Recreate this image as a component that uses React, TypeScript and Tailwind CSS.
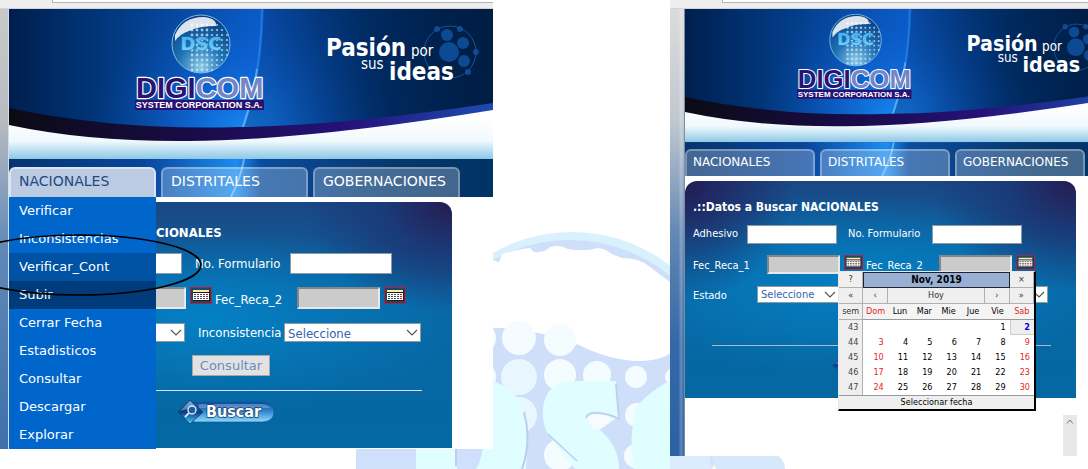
import React from "react";

const verdana = "font-['DejaVu_Sans',sans-serif]";
const tahoma = "font-['DejaVu_Sans_Condensed','DejaVu_Sans',sans-serif]";

function Watermark() {
  const dots: [number, number, number][] = [
    [480, 338, 16], [519, 338, 17], [560, 340, 16],
    [480, 377, 16], [519, 377, 18], [560, 375, 16], [597, 375, 14], [636, 377, 11], [674, 377, 9],
    [519, 415, 18], [560, 455, 16], [637, 415, 12], [636, 456, 12],
  ];
  return (
    <svg className="absolute inset-0 h-full w-full" viewBox="0 0 1088 469" preserveAspectRatio="none" aria-hidden="true">
      <circle cx="572" cy="392" r="160" fill="#d8f1fd" />
      <circle cx="570" cy="398" r="158" fill="#cfdffa" />
      <path d="M480 256 L499 262 L502 254 Q520 249 530 248 L534 252 Q545 253 550 247 Q560 244 568 249 Q584 252 598 248 Q606 249 612 254 L622 258 Q640 258 650 267 L670 282 L690 310 Q690 360 640 361 Q610 361 577 344 L574 347 Q540 326 480 328 Z" fill="#ffffff" />
      {dots.map(([x, y, r], i) => (
        <circle key={i} cx={x} cy={y} r={r} fill={i === 4 || i === 9 ? "#e8f7fd" : "#f5fcff"} />
      ))}
      <path d="M356 440 H416 V469 H356 Z" fill="#cfe0fc" />
      <path d="M416 380 H490 Q527 392 528 430 L526 469 H416 Z" fill="#e0fdff" />
      <path d="M457 440 H484 Q482 460 476 469 H457 Z" fill="#cfe0fc" />
      <path d="M524 412 Q532 440 522 469" fill="none" stroke="#bccdf0" strokeWidth="2" />
      <path d="M456 446 V466" fill="none" stroke="#bccdf0" strokeWidth="2" />
      <path d="M543 408 Q546 382 572 381 H616 Q618 396 618 417 L608 424 Q600 428 600 430 Q619 446 619 469 H575 L548 434 Q542 424 543 408 Z" fill="#e0fdff" />
      <path d="M587 417 Q600 412 611 418 Q603 433 592 428 Z" fill="#f7fdff" />
      <path d="M586 418 Q588 412 599 413 Q610 414 619 419 L616 384" fill="none" stroke="#c3cff0" strokeWidth="2" />
      <path d="M548 434 L577 461" fill="none" stroke="#bccdf0" strokeWidth="1.5" />
      <path d="M690 372 Q652 386 636 408 Q628 440 634 469 H700 Z" fill="#e0fdff" />
      <path d="M670 450 H708 L712 469 H670 Z" fill="#dcecff" />
      <path d="M708 450 H770 Q785 458 785 469 H716 Z" fill="#d6e8fc" />
    </svg>
  );
}

function BannerArt({ id, width }: { id: string; width: number }) {
  const url = (name: string) => `url(#${id}-${name})`;
  const dots: [number, number, number][] = [];
  for (let r = 0; r < 11; r++)
    for (let c = 0; c < 8; c++) {
      const x = 183 + c * 5;
      const y = 16 + r * 5;
      const d = Math.hypot(x - 192, y - 36);
      if (d < 28) dots.push([x, y, c > 3 ? 1.1 : 1.4]);
    }
  return (
    <svg className="absolute inset-0 h-full w-full" viewBox={`0 0 ${width} 188`} preserveAspectRatio="xMinYMin slice" role="img" aria-label="Digicom System Corporation S.A.">
      <defs>
        <linearGradient id={`${id}-sky`} x1="0" x2="484" y1="0" y2="0" gradientUnits="userSpaceOnUse">
          <stop offset="0" stopColor="#001e4e" />
          <stop offset="0.15" stopColor="#003272" />
          <stop offset="0.35" stopColor="#0648a0" />
          <stop offset="0.53" stopColor="#0a5ccc" />
          <stop offset="0.75" stopColor="#003a80" />
          <stop offset="1" stopColor="#00204c" />
        </linearGradient>
        <radialGradient id={`${id}-glow`} cx="235" cy="125" r="150" gradientUnits="userSpaceOnUse">
          <stop offset="0" stopColor="#1a8cf6" stopOpacity="0.9" />
          <stop offset="0.5" stopColor="#0f6adc" stopOpacity="0.5" />
          <stop offset="1" stopColor="#0a50b0" stopOpacity="0" />
        </radialGradient>
        <linearGradient id={`${id}-shade`} x1="260" x2="484" y1="80" y2="0" gradientUnits="userSpaceOnUse">
          <stop offset="0" stopColor="#001c48" stopOpacity="0.25" />
          <stop offset="1" stopColor="#001c40" stopOpacity="0.8" />
        </linearGradient>
        <linearGradient id={`${id}-band`} x1="0" x2="484" y1="0" y2="0" gradientUnits="userSpaceOnUse">
          <stop offset="0" stopColor="#0b0b14" />
          <stop offset="0.4" stopColor="#190c4a" />
          <stop offset="0.7" stopColor="#26127a" />
          <stop offset="1" stopColor="#1d4cae" />
        </linearGradient>
        <linearGradient id={`${id}-white`} x1="0" x2="0" y1="110" y2="150" gradientUnits="userSpaceOnUse">
          <stop offset="0" stopColor="#ffffff" />
          <stop offset="0.55" stopColor="#f0f9fd" />
          <stop offset="1" stopColor="#8cc8e6" />
        </linearGradient>
        <linearGradient id={`${id}-nav`} x1="0" x2="484" y1="0" y2="0" gradientUnits="userSpaceOnUse">
          <stop offset="0" stopColor="#06346e" />
          <stop offset="0.28" stopColor="#08469c" />
          <stop offset="0.47" stopColor="#1c8cf0" />
          <stop offset="0.52" stopColor="#0a4c9e" />
          <stop offset="0.8" stopColor="#06386e" />
          <stop offset="1" stopColor="#013264" />
        </linearGradient>
        <radialGradient id={`${id}-ball`} cx="0.5" cy="0.9" r="0.9">
          <stop offset="0" stopColor="#8cc9ea" />
          <stop offset="0.45" stopColor="#1e72b4" />
          <stop offset="1" stopColor="#083a7c" />
        </radialGradient>
        <linearGradient id={`${id}-dsc`} x1="0" x2="0" y1="0" y2="1">
          <stop offset="0" stopColor="#3fa9ea" />
          <stop offset="1" stopColor="#7cdcff" />
        </linearGradient>
      </defs>
      <rect width="484" height="188" fill={url("sky")} />
      <rect width="484" height="188" fill={url("glow")} />
      <path d="M255 0 Q253 80 230 130 H484 V0 Z" fill={url("shade")} />
      <path d="M253 0 Q252 74 230 130" fill="none" stroke="#4aa2f4" strokeOpacity="0.4" strokeWidth="2" />
      <path d="M248 60 Q242 100 229 130" fill="none" stroke="#9ad6ff" strokeOpacity="0.45" strokeWidth="2" />
      <path d="M0 99 Q110 122 230 118 Q330 117 484 94 V150 H0 Z" fill={url("band")} />
      <path d="M0 116 Q80 133 180 132 Q300 131 484 101 V150 H0 Z" fill={url("white")} />
      <rect y="150" width="484" height="38" fill={url("nav")} />
      <path d="M235 150 Q232 168 222 188" fill="none" stroke="#9ad6ff" strokeOpacity="0.6" strokeWidth="2" />

      <circle cx="192" cy="35" r="29" fill={url("ball")} stroke="#7cbce4" strokeWidth="1" />
      {dots.map(([x, y, r], i) => (
        <circle key={i} cx={x} cy={y} r={r} fill="#cdeaf8" fillOpacity="0.75" />
      ))}
      <path d="M166 26 Q174 8 194 8 Q208 9 207 17 Q190 17 180 22 Q171 25 166 32 Z" fill="#ffffff" fillOpacity="0.85" />
      <text x="192" y="41" textAnchor="middle" fontFamily="DejaVu Sans, sans-serif" fontWeight="700" fontSize="18" fill={url("dsc")} stroke="#2a7cc4" strokeWidth="1" paintOrder="stroke">DSC</text>

      <text x="127" y="89" fontFamily="Liberation Sans, sans-serif" fontWeight="700" fontSize="29" stroke="#ffffff" strokeWidth="2.4" strokeLinejoin="round" paintOrder="stroke" fill="#2c1270">
        DIGI<tspan fill="#7484c4">COM</tspan>
      </text>
      <rect x="126" y="91" width="129" height="10" fill="#2a1273" />
      <text x="190" y="99" textAnchor="middle" fontFamily="Liberation Sans Narrow, Liberation Sans, sans-serif" fontWeight="700" fontSize="9" fill="#ffffff">SYSTEM CORPORATION S.A.</text>

      <g fill="#0d4a94">
        <circle cx="440" cy="43" r="10" />
        <circle cx="438" cy="26" r="6" />
        <circle cx="454" cy="34" r="6" />
        <circle cx="455" cy="52" r="6" />
        <circle cx="428" cy="20" r="3" />
        <circle cx="451" cy="20" r="3" />
        <circle cx="467" cy="43" r="3" />
        <circle cx="459" cy="63" r="3" />
      </g>
      <circle cx="441" cy="43" r="26" fill="none" stroke="#1a5294" strokeWidth="1" />
      <g fontFamily="DejaVu Sans Condensed, DejaVu Sans, sans-serif" fill="#ffffff">
        <text x="317" y="47" fontSize="24" fontWeight="700">Pasión</text>
        <text x="402" y="47" fontSize="15">por</text>
        <text x="352" y="60" fontSize="15">sus</text>
        <text x="380" y="71" fontSize="24" fontWeight="700">ideas</text>
      </g>
    </svg>
  );
}

function BrowserStrip({ offset }: { offset: string }) {
  return (
    <div className={`h-[9px] border-b border-[#d4d4d4] bg-[#eeeeee] ${offset}`}>
      <div className="h-[3px] border-b border-l border-[#b4b4b8] bg-white" />
    </div>
  );
}

const tabs = ["NACIONALES", "DISTRITALES", "GOBERNACIONES"];

function CalendarIcon({ className }: { className: string }) {
  return (
    <button type="button" aria-label="Abrir calendario" className={className}>
      <svg viewBox="0 0 22 17" className="block h-full w-full">
        <rect width="22" height="17" fill="#b81c44" />
        <rect x="1" y="1" width="20" height="15" fill="#1c4a62" />
        <rect x="3" y="3" width="17" height="11" fill="#1c1c1c" />
        <rect x="3" y="3" width="16" height="2" fill="#ffe9a8" />
        <rect x="3" y="6" width="16" height="7" fill="#ffffff" />
        {[0, 1, 2].map((r) =>
          [0, 1, 2, 3, 4].map((c) => (
            <rect key={`${r}${c}`} x={4 + c * 3} y={7 + r * 2} width="2" height="1" fill={c === 4 ? "#c02030" : "#4a4a4a"} />
          ))
        )}
      </svg>
    </button>
  );
}

function Picker({ id, label, className }: { id: string; label?: string; className: string }) {
  return (
    <span className={`relative block shrink-0 ${className}`}>
      <select id={id} aria-label={label} className="block h-full w-full appearance-none border border-[#8c9aa6] bg-white pl-[3px] text-[#3464ac] outline-none">
        <option>Seleccione</option>
      </select>
      <svg viewBox="0 0 12 7" className="pointer-events-none absolute top-1/2 right-[3px] -mt-1 h-[7px] w-3" fill="none" stroke="#555" strokeWidth="1.2">
        <path d="M1 1 L6 6 L11 1" />
      </svg>
    </span>
  );
}

function SearchButton({ id, className, children }: { id: string; className: string; children?: React.ReactNode }) {
  return (
    <button type="button" aria-label="Buscar" className={className}>
      <svg viewBox="0 0 98 26" className="block h-full w-full">
        <defs>
          <linearGradient id={`${id}-pill`} x1="0" x2="0" y1="0" y2="1">
            <stop offset="0" stopColor="#0c4a9c" />
            <stop offset="0.45" stopColor="#2e84cc" />
            <stop offset="1" stopColor="#8fdcff" />
          </linearGradient>
          <linearGradient id={`${id}-gem`} x1="0" x2="0" y1="0" y2="1">
            <stop offset="0" stopColor="#4a8cc8" />
            <stop offset="0.5" stopColor="#0a3a84" />
            <stop offset="1" stopColor="#48d4f8" />
          </linearGradient>
        </defs>
        <path d="M16 3 H86 Q97 4 97 13 Q97 22 86 23 H16 Z" fill={`url(#${id}-pill)`} stroke="#1558a0" strokeWidth="0.8" />
        <path d="M22 5 H86 Q92 6 93 9 H22 Z" fill="#ffffff" fillOpacity="0.25" />
        <path d="M13 1 L26 13 L13 25 L1 13 Z" fill={`url(#${id}-gem)`} stroke="#0a3a74" strokeWidth="0.8" />
        <path d="M3 12 L13 2 L20 9 Q10 9 3 12 Z" fill="#ffffff" fillOpacity="0.3" />
        <circle cx="15" cy="11" r="4" fill="#1b5c9e" stroke="#d4ecfa" strokeWidth="1.4" />
        <path d="M12 14 L8 18" stroke="#d4ecfa" strokeWidth="1.8" />
        <g fontFamily="DejaVu Sans Condensed, DejaVu Sans, sans-serif" fontWeight="700" fontSize="16">{children}</g>
      </svg>
    </button>
  );
}

const menuItems = ["Verificar", "Inconsistencias", "Verificar_Cont", "Subir", "Cerrar Fecha", "Estadisticos", "Consultar", "Descargar", "Explorar"];

const panelBg =
  "bg-[radial-gradient(ellipse_150px_110px_at_100%_0%,#261c50_0%,#1a3a78_45%,transparent_100%),radial-gradient(ellipse_110px_120px_at_0%_0%,#231d56_0%,transparent_100%),radial-gradient(ellipse_260px_90px_at_45%_48%,#0480c4_0%,transparent_100%),linear-gradient(#1a4784_0%,#0a66a4_35%,#0468a2_100%)]";

const itemTone = (i: number) => (i === 2 ? "bg-[#0052a4]" : i === 3 ? "bg-[#003c7c]" : "");

function MenuShot() {
  return (
    <section className="flex min-w-0 flex-col">
      <BrowserStrip offset="pl-[52px]" />
      <div className="flex h-[440px] bg-white">
        <div className="w-[9px] shrink-0 border-r border-[#d6dde4] bg-[linear-gradient(#c8c8c8_0%,#b8bcc0_25%,#5f88b8_55%,#3f70aa_100%)]" />
        <div className="min-w-0 flex-1">
          <header className="relative h-[188px] overflow-hidden">
            <BannerArt id="a" width={484} />
            <nav className={`relative flex gap-[5px] pt-[158px] text-[14px] ${verdana}`}>
              {tabs.map((t, i) => (
                <a
                  key={t}
                  href="#"
                  className={`flex h-[30px] w-[147px] items-center rounded-t-md border-x-2 border-t-2 pb-1 pl-2 whitespace-nowrap ${
                    i === 0 ? "border-[#dbe5f2] bg-[#bccbe2] text-[#1c4a84]" : "border-white/30 bg-white/25 text-white"
                  }`}
                >
                  {t}
                </a>
              ))}
            </nav>
          </header>
          <div className="relative mr-[41px] pt-[5px]">
            <form className={`h-[246px] rounded-tr-xl pt-[19px] pl-[10px] text-[13px] text-white ${panelBg} ${tahoma}`}>
              <h2 className="ml-[137px] h-6 leading-6 font-bold">CIONALES</h2>
              <div className="mt-2 flex h-[21px] items-center">
                <input aria-label="Adhesivo" className="ml-[61px] h-full w-[102px] border border-[#8c9aa6] bg-white text-black" />
                <label htmlFor="a2" className="ml-[13px] w-[95px] whitespace-nowrap">No. Formulario</label>
                <input id="a2" className="h-full w-[102px] border border-[#8c9aa6] bg-white text-black" />
              </div>
              <div className="mt-[13px] flex h-[22px] items-center">
                <input aria-label="Fec_Reca_1" className="ml-[84px] h-full w-[83px] border-2 border-t-[#868686] border-r-[#e8e8e8] border-b-[#e8e8e8] border-l-[#868686] bg-[#cbcbcb]" />
                <CalendarIcon className="ml-1 h-[17px] w-[22px] self-start" />
                <label htmlFor="a4" className="ml-[3px] w-[82px] pt-1">Fec_Reca_2</label>
                <input id="a4" className="h-full w-[83px] border-2 border-t-[#868686] border-r-[#e8e8e8] border-b-[#e8e8e8] border-l-[#868686] bg-[#cbcbcb]" />
                <CalendarIcon className="ml-1 h-[17px] w-[22px] self-start" />
              </div>
              <div className="mt-[14px] flex h-[19px] items-center">
                <span className="relative ml-[73px] block h-full w-[93px]">
                  <select aria-label="Estado" className="block h-full w-full appearance-none border border-[#8c9aa6] bg-white" />
                  <svg viewBox="0 0 12 7" className="pointer-events-none absolute top-1/2 right-[3px] -mt-1 h-[7px] w-3" fill="none" stroke="#555" strokeWidth="1.2">
                    <path d="M1 1 L6 6 L11 1" />
                  </svg>
                </span>
                <label htmlFor="a6" className="ml-[13px] w-[86px]">Inconsistencia</label>
                <Picker id="a6" className="h-full w-[137px]" />
              </div>
              <button type="button" className="mt-[13px] ml-[173px] block h-[21px] w-[78px] border border-[#a8a8a8] bg-[#e2e2e2] font-['DejaVu_Sans',sans-serif] text-[13px] leading-none text-[#6a8cc0]">
                Consultar
              </button>
              <hr className="mt-[14px] mr-[30px] ml-5 border-t border-[#cfe4ee]" />
              <SearchButton id="sa" className="mt-2 ml-[158px] block h-[26px] w-[98px]">
                <text x="29" y="18" fill="#ffffff" stroke="#163c6c" strokeWidth="1.4" paintOrder="stroke">Buscar</text>
              </SearchButton>
            </form>
            <ul className={`absolute top-0 left-0 w-[147px] bg-[#0066cc] text-[13px] text-white ${verdana}`}>
              {menuItems.map((m, i) => (
                <li key={m} className={itemTone(i)}>
                  <a href="#" className="flex h-7 items-center pl-[10px]">{m}</a>
                </li>
              ))}
            </ul>
          </div>
        </div>
      </div>
    </section>
  );
}

const days = ["Dom", "Lun", "Mar", "Mie", "Jue", "Vie", "Sab"];
const weeks: (number | null)[][] = [
  [null, null, null, null, null, 1, 2],
  [3, 4, 5, 6, 7, 8, 9],
  [10, 11, 12, 13, 14, 15, 16],
  [17, 18, 19, 20, 21, 22, 23],
  [24, 25, 26, 27, 28, 29, 30],
];

function Calendar() {
  const cell = "border-r border-b border-[#b0b0b0] bg-[#efefef] text-[#333]";
  return (
    <div className={`absolute top-[90px] left-[153px] w-[198px] border-t border-r-2 border-b-2 border-l border-t-[#e8e8e8] border-r-black border-b-black border-l-[#e8e8e8] bg-white text-[9px] leading-none text-black ${tahoma}`}>
      <table className="w-full table-fixed border-separate border-spacing-0 text-center">
        <thead>
          <tr className="h-4">
            <td className={cell}><button type="button">?</button></td>
            <th colSpan={6} className="border border-[#223] bg-[#98b0d4] text-[10px] font-bold">Nov, 2019</th>
            <td className={cell}><button type="button">×</button></td>
          </tr>
          <tr className="h-4">
            <td className={cell}><button type="button">«</button></td>
            <td className={cell}><button type="button">‹</button></td>
            <td colSpan={4} className={cell}><button type="button">Hoy</button></td>
            <td className={cell}><button type="button">›</button></td>
            <td className={cell}><button type="button">»</button></td>
          </tr>
          <tr className="h-4">
            <th className={`${cell} font-normal`}>sem</th>
            {days.map((d) => (
              <th key={d} className={`border-b border-[#999] bg-[#f4f4f4] font-normal ${d === "Dom" || d === "Sab" ? "text-[#e81c24]" : ""}`}>{d}</th>
            ))}
          </tr>
        </thead>
        <tbody className="text-right">
          {weeks.map((w, r) => (
            <tr key={r} className="h-[15px]">
              <td className="border-r border-[#b0b0b0] bg-[#efefef] pr-1 text-[#444]">{43 + r}</td>
              {w.map((d, c) => (
                <td
                  key={c}
                  className={`pr-1 ${d === 2 ? "border-b border-l border-[#ccc] bg-[#eee] font-bold text-[#0000f0]" : c === 0 || c === 6 ? "text-[#e81c24]" : ""}`}
                >
                  {d}
                </td>
              ))}
            </tr>
          ))}
        </tbody>
        <tfoot>
          <tr className="h-[14px]">
            <td colSpan={8} className="border-t border-[#999] bg-[#efefef]">Seleccionar fecha</td>
          </tr>
        </tfoot>
      </table>
    </div>
  );
}

function CalendarShot() {
  return (
    <section className="flex min-w-0 flex-col">
      <BrowserStrip offset="pl-[52px]" />
      <div className="flex h-[447px] bg-white">
        <div className="w-[15px] shrink-0 border-r border-[#7d8d9d] bg-[linear-gradient(90deg,transparent_60%,#ffffff40_80%,transparent),linear-gradient(#dcdcdc_0%,#c0c8d0_25%,#6488b4_50%,#3468a8_75%,#2c62a4_100%)]" />
        <div className="min-w-0 flex-1">
          <header className="relative h-[167px] overflow-hidden">
            <BannerArt id="b" width={455} />
            <nav className={`relative flex gap-[5px] pt-[140px] text-[12px] ${verdana}`}>
              {tabs.map((t) => (
                <a key={t} href="#" className="flex h-[27px] w-[130px] items-center rounded-t-md border-x-2 border-t-2 border-white/30 bg-white/25 pb-1 pl-[6px] whitespace-nowrap text-white">
                  {t}
                </a>
              ))}
            </nav>
          </header>
          <div className="relative mt-[5px] mr-3">
            <form className={`h-[217px] rounded-t-xl pt-4 pl-2 text-[11px] text-white ${panelBg} ${tahoma}`}>
              <h2 className="h-5 text-[12px] leading-5 font-bold">.::Datos a Buscar NACIONALES</h2>
              <div className="mt-2 flex h-[19px] items-center">
                <label htmlFor="b1" className="w-[54px]">Adhesivo</label>
                <input id="b1" className="h-full w-[90px] border border-[#8c9aa6] bg-white text-black" />
                <label htmlFor="b2" className="ml-[11px] w-[84px] whitespace-nowrap">No. Formulario</label>
                <input id="b2" className="h-full w-[90px] border border-[#8c9aa6] bg-white text-black" />
              </div>
              <div className="mt-[11px] flex h-[19px] items-center">
                <label htmlFor="b3" className="w-[74px] pt-1">Fec_Reca_1</label>
                <input id="b3" className="h-full w-[73px] border-2 border-t-[#868686] border-r-[#e8e8e8] border-b-[#e8e8e8] border-l-[#868686] bg-[#cbcbcb]" />
                <CalendarIcon className="ml-1 h-[15px] w-[19px] self-start" />
                <label htmlFor="b4" className="ml-[3px] w-[73px] pt-1">Fec_Reca_2</label>
                <input id="b4" className="h-full w-[73px] border-2 border-t-[#868686] border-r-[#e8e8e8] border-b-[#e8e8e8] border-l-[#868686] bg-[#cbcbcb]" />
                <CalendarIcon className="ml-1 h-[15px] w-[19px] self-start" />
              </div>
              <div className="mt-3 flex h-[17px] items-center">
                <label htmlFor="b5" className="w-16 pt-1">Estado</label>
                <Picker id="b5" className="h-full w-[82px]" />
                <span className="relative ml-[87px] block h-full w-[122px]">
                  <select aria-label="Inconsistencia" className="block h-full w-full appearance-none border border-[#8c9aa6] bg-white" />
                  <svg viewBox="0 0 12 7" className="pointer-events-none absolute top-1/2 right-[3px] -mt-1 h-[7px] w-3" fill="none" stroke="#555" strokeWidth="1.2">
                    <path d="M1 1 L6 6 L11 1" />
                  </svg>
                </span>
              </div>
              <hr className="mt-[42px] mr-[25px] ml-[19px] border-t border-[#a8bcc8]" />
              <SearchButton id="sb" className="mt-2 ml-[139px] block h-[23px] w-[87px]" />
            </form>
            <Calendar />
          </div>
          <div className="mt-[17px] mr-[11px] ml-auto flex h-[41px] w-[14px] justify-center bg-[#e8e8e8] pt-1">
            <svg viewBox="0 0 8 5" className="h-[5px] w-2" fill="none" stroke="#777">
              <path d="M1 4.5 L4 1 L7 4.5" />
            </svg>
          </div>
        </div>
      </div>
    </section>
  );
}

export default function App() {
  return (
    <main className="relative min-h-[469px] overflow-hidden bg-white">
      <Watermark />
      <div className="relative grid grid-cols-[493fr_418fr] items-start gap-x-[177px]">
        <MenuShot />
        <CalendarShot />
      </div>
      <svg className="pointer-events-none absolute top-[233px] -left-[45px] h-16 w-[248px]" viewBox="0 0 248 64" fill="none" aria-hidden="true">
        <ellipse cx="124" cy="32" rx="122" ry="30" stroke="#000000" strokeWidth="1.7" />
      </svg>
    </main>
  );
}
